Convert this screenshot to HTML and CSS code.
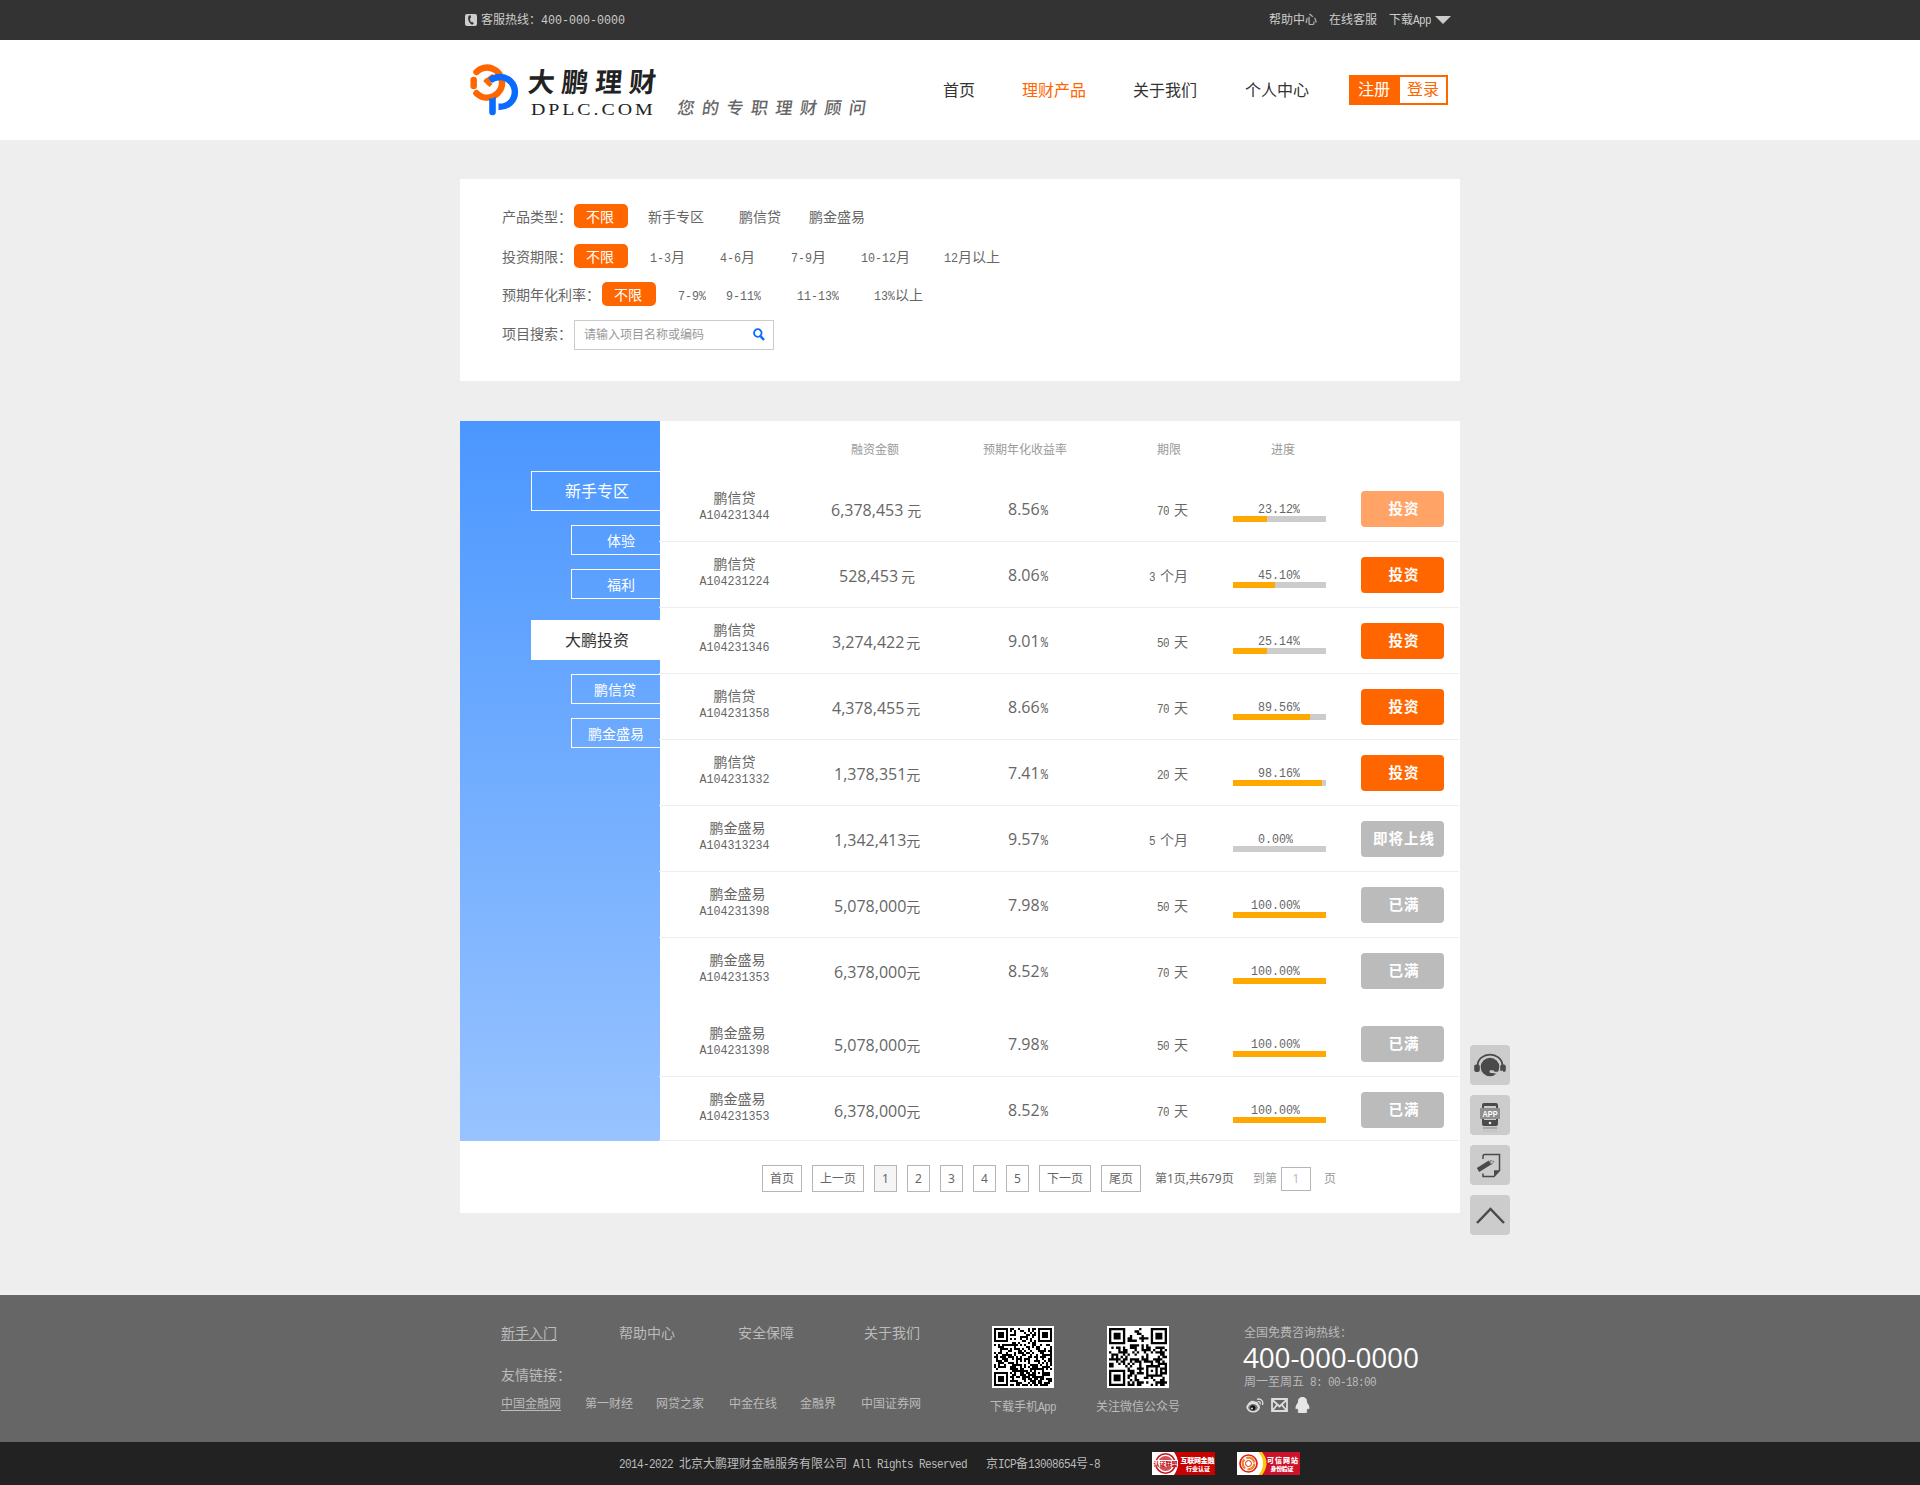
FILE: index.html
```html
<!DOCTYPE html>
<html lang="zh-CN">
<head>
<meta charset="utf-8">
<title>大鹏理财 - 理财产品</title>
<link rel="stylesheet" href="styles.css">
</head>
<body>
<div class="topbar"><div class="wrap topbar-in">
  <svg class="phone" width="12" height="12" viewBox="0 0 12 12"><rect width="12" height="12" rx="2" fill="#ccc"/><path d="M3.800 1.500C2.200 4.500 3.600 9 7.200 10.800L8.800 9.600 7.600 8 6.400 8.300C5.300 7.300 4.900 5.500 5.100 4.200L6.100 3.600 5.600 1.300Z" fill="#333"/></svg>
  <span class="hot">客服热线：<span class="n">400-000-0000</span></span>
  <div class="toplinks"><a>帮助中心</a><a>在线客服</a><a>下载<span class="n6">App</span></a><svg width="16" height="8" viewBox="0 0 16 8"><path d="M0 0H16L8 8Z" fill="#ccc"/></svg></div>
</div></div>

<header class="header"><div class="wrap header-in">
  <svg class="logo" width="50" height="54" viewBox="469 63 50 54" fill="none" stroke-width="6.500">
    <path d="M476.500 72A15 15 0 0 1 502 81A15 15 0 0 1 476.500 93.200" stroke="#f60" stroke-linecap="round"/>
    <path d="M473.700 80V86" stroke="#f60" stroke-linecap="round"/>
    <path d="M485.500 82.500L494 76" stroke="#f60" stroke-width="5.500"/>
    <path d="M484.800 79.500L491 85.500" stroke="#f60" stroke-width="4.500"/>
    <path d="M490 80.500Q494.500 77 500 77A14.900 14.900 0 0 1 500 106.800H498.500" stroke="#0a6cff"/>
    <path d="M489.200 98Q492.500 99.500 495.800 96.500V112A3.300 3.300 0 0 1 489.200 112Z" fill="#0a6cff"/>
  </svg>
  <div class="brand"><div class="brand-cn">大鹏理财</div><div class="brand-en">DPLC.COM</div></div>
  <div class="slogan">您的专职理财顾问</div>
  <nav class="nav"><a>首页</a><a class="on">理财产品</a><a>关于我们</a><a>个人中心</a></nav>
  <div class="auth"><a class="reg">注册</a><a class="login">登录</a></div>
</div></header>

<section class="wrap filters">
  <div class="frow f1"><span>产品类型：</span><a class="pill">不限</a><a>新手专区</a><a>鹏信贷</a><a>鹏金盛易</a></div>
  <div class="frow f2"><span>投资期限：</span><a class="pill">不限</a><a><i class="n">1-3</i>月</a><a><i class="n">4-6</i>月</a><a><i class="n">7-9</i>月</a><a><i class="n">10-12</i>月</a><a><i class="n">12</i>月以上</a></div>
  <div class="frow f3"><span>预期年化利率：</span><a class="pill">不限</a><a><i class="n">7-9%</i></a><a><i class="n">9-11%</i></a><a><i class="n">11-13%</i></a><a><i class="n">13%</i>以上</a></div>
  <div class="frow f4"><span>项目搜索：</span><div class="search"><span>请输入项目名称或编码</span><svg width="12" height="13" viewBox="0 0 12 13" fill="none" stroke="#0a6cff"><circle cx="4.800" cy="5" r="3.800" stroke-width="1.800"/><path d="M7.500 8.200L11 12" stroke-width="2.500"/></svg></div></div>
</section>

<main class="wrap board">
  <div class="board-top">
    <aside class="side">
      <a class="big">新手专区</a><a class="sub two">体验</a><a class="sub two">福利</a>
      <a class="big active">大鹏投资</a><a class="sub three">鹏信贷</a><a class="sub four">鹏金盛易</a>
    </aside>
    <div class="list">
      <div class="thead"><span>融资金额</span><span>预期年化收益率</span><span>期限</span><span>进度</span></div>
      <div class="row"><div class="name">鹏信贷<i class="n">A104231344</i></div><div class="amt wide"><b>6,378,453</b>元</div><div class="rate"><b>8.56</b><i class="n6">%</i></div><div class="term"><i class="n6">70</i>天</div><div class="prog"><i class="n">23.12%</i><div class="bar"><div class="fill" style="width:34px"></div></div></div><a class="btn soft">投资</a></div>
      <div class="row"><div class="name">鹏信贷<i class="n">A104231224</i></div><div class="amt short"><b>528,453</b>元</div><div class="rate"><b>8.06</b><i class="n6">%</i></div><div class="term"><i class="n6">3</i>个月</div><div class="prog"><i class="n">45.10%</i><div class="bar"><div class="fill" style="width:42px"></div></div></div><a class="btn">投资</a></div>
      <div class="row"><div class="name">鹏信贷<i class="n">A104231346</i></div><div class="amt"><b>3,274,422</b>元</div><div class="rate"><b>9.01</b><i class="n6">%</i></div><div class="term"><i class="n6">50</i>天</div><div class="prog"><i class="n">25.14%</i><div class="bar"><div class="fill" style="width:34px"></div></div></div><a class="btn">投资</a></div>
      <div class="row"><div class="name">鹏信贷<i class="n">A104231358</i></div><div class="amt"><b>4,378,455</b>元</div><div class="rate"><b>8.66</b><i class="n6">%</i></div><div class="term"><i class="n6">70</i>天</div><div class="prog"><i class="n">89.56%</i><div class="bar"><div class="fill" style="width:77px"></div></div></div><a class="btn">投资</a></div>
      <div class="row"><div class="name">鹏信贷<i class="n">A104231332</i></div><div class="amt tight"><b>1,378,351</b>元</div><div class="rate"><b>7.41</b><i class="n6">%</i></div><div class="term"><i class="n6">20</i>天</div><div class="prog"><i class="n">98.16%</i><div class="bar"><div class="fill" style="width:89px"></div></div></div><a class="btn">投资</a></div>
      <div class="row"><div class="name four">鹏金盛易<i class="n">A104313234</i></div><div class="amt tight"><b>1,342,413</b>元</div><div class="rate"><b>9.57</b><i class="n6">%</i></div><div class="term"><i class="n6">5</i>个月</div><div class="prog"><i class="n">0.00%</i><div class="bar"></div></div><a class="btn off">即将上线</a></div>
      <div class="row"><div class="name four">鹏金盛易<i class="n">A104231398</i></div><div class="amt tight"><b>5,078,000</b>元</div><div class="rate"><b>7.98</b><i class="n6">%</i></div><div class="term"><i class="n6">50</i>天</div><div class="prog full"><i class="n">100.00%</i><div class="bar"><div class="fill" style="width:93px"></div></div></div><a class="btn off">已满</a></div>
      <div class="row noline"><div class="name four">鹏金盛易<i class="n">A104231353</i></div><div class="amt tight"><b>6,378,000</b>元</div><div class="rate"><b>8.52</b><i class="n6">%</i></div><div class="term"><i class="n6">70</i>天</div><div class="prog full"><i class="n">100.00%</i><div class="bar"><div class="fill" style="width:93px"></div></div></div><a class="btn off">已满</a></div>
      <div class="row"><div class="name four">鹏金盛易<i class="n">A104231398</i></div><div class="amt tight"><b>5,078,000</b>元</div><div class="rate"><b>7.98</b><i class="n6">%</i></div><div class="term"><i class="n6">50</i>天</div><div class="prog full"><i class="n">100.00%</i><div class="bar"><div class="fill" style="width:93px"></div></div></div><a class="btn off">已满</a></div>
      <div class="row last"><div class="name four">鹏金盛易<i class="n">A104231353</i></div><div class="amt tight"><b>6,378,000</b>元</div><div class="rate"><b>8.52</b><i class="n6">%</i></div><div class="term"><i class="n6">70</i>天</div><div class="prog full"><i class="n">100.00%</i><div class="bar"><div class="fill" style="width:93px"></div></div></div><a class="btn off">已满</a></div>
    </div>
  </div>
  <div class="pager">
    <a class="p2">首页</a><a class="p3">上一页</a><a class="p1 cur">1</a><a class="p1">2</a><a class="p1">3</a><a class="p1">4</a><a class="p1">5</a><a class="p3">下一页</a><a class="p2">尾页</a>
    <span class="total">第1页,共679页</span><span class="goto">到第</span><span class="pageno">1</span><span class="goto end">页</span>
  </div>
  <div class="tools">
    <svg viewBox="0 0 40 40"><rect width="40" height="40" rx="4" fill="#ccc"/><circle cx="20" cy="22" r="9.300" fill="#4a4a4a"/><path d="M7.500 20.500C8.500 6 31.500 6 32.500 20.500" fill="none" stroke="#4a4a4a" stroke-width="1.800"/><rect x="4.200" y="19.500" width="5.600" height="7.500" rx="2" fill="#4a4a4a"/><rect x="30.200" y="19.500" width="5.600" height="7.500" rx="2" fill="#4a4a4a"/><path d="M33 26C30 28.500 26 28 22 26.800" fill="none" stroke="#ccc" stroke-width="1.800"/><rect x="19.500" y="25.300" width="4.500" height="2.600" rx="1.300" fill="#ccc"/></svg>
    <svg viewBox="0 0 40 40"><rect width="40" height="40" rx="4" fill="#ccc"/><rect x="12" y="8" width="16" height="23" rx="2" fill="#4a4a4a"/><rect x="14" y="11" width="12" height="14" fill="#ccc"/><rect x="10" y="13" width="20" height="11" fill="#8e8e8e"/><text x="20" y="22" text-anchor="middle" textLength="15" lengthAdjust="spacingAndGlyphs" class="apptext">APP</text><circle cx="20" cy="28" r="1.300" fill="#eee"/><path d="M13 33H27" stroke="#a9a9a9" stroke-width="2"/><path d="M13 36H27" stroke="#bdbdbd"/></svg>
    <svg viewBox="0 0 40 40"><rect width="40" height="40" rx="4" fill="#ccc"/><path d="M13 14V11Q13 9.500 14.500 9.500H29.500V25.500L24 31.500H13V28.500" fill="none" stroke="#4a4a4a" stroke-width="1.500"/><path d="M29.800 25.300L24 31.800 24 25.300Z" fill="#4a4a4a"/><path d="M8 25L20 17.500" stroke="#4a4a4a" stroke-width="4.500"/><path d="M20.200 15.500L24 16.500 21.500 19.500Z" fill="#ddd" stroke="#4a4a4a" stroke-width=".6"/></svg>
    <svg viewBox="0 0 40 40"><rect width="40" height="40" rx="4" fill="#ccc"/><path d="M7 28L20.500 14 34 28" fill="none" stroke="#4a4a4a" stroke-width="2.500"/></svg>
  </div>
</main>

<footer class="footer"><div class="wrap footer-in">
  <div class="fl">
    <div class="flinks"><a class="u">新手入门</a><a>帮助中心</a><a>安全保障</a><a>关于我们</a></div>
    <div class="ftitle">友情链接：</div>
    <div class="friends"><a class="u">中国金融网</a><a>第一财经</a><a>网贷之家</a><a>中金在线</a><a>金融界</a><a>中国证券网</a></div>
  </div>
  <div class="qr q1"><svg id="qr-app" width="62" height="62" viewBox="0 0 62 62"></svg><span>下载手机<i class="n6">App</i></span></div>
  <div class="qr q2"><svg id="qr-wechat" width="62" height="62" viewBox="0 0 62 62"></svg><span>关注微信公众号</span></div>
  <div class="contact">
    <div>全国免费咨询热线：</div><div class="tel">400-000-0000</div><div class="hours">周一至周五<i class="n6"> 8: 00-18:00</i></div>
    <div class="soc">
      <svg width="18" height="16" viewBox="0 0 18 16"><ellipse cx="7.200" cy="10.200" rx="6.800" ry="5.200" fill="#ddd"/><path d="M2 6.800C4 4 6.500 3.200 8 4.200L11.500 5 12 8Z" fill="#ddd"/><ellipse cx="7" cy="10.600" rx="4.800" ry="3.500" fill="#777"/><circle cx="6.800" cy="10.800" r="2.600" fill="#111"/><circle cx="6" cy="11.500" r=".9" fill="#fff"/><path d="M11 2.300C15 1 18 4.500 16.300 8M11.700 4.700C13.700 4.200 14.700 5.700 14 7.300" fill="none" stroke="#ddd" stroke-width="1.300"/></svg>
      <svg width="17" height="14" viewBox="0 0 17 14" fill="none" stroke="#ddd" stroke-width="1.800"><path d="M1 1H16V13H1ZM1.500 2L8.500 8.500 15.500 2M1.500 12.500L6 7M15.500 12.500L11 7"/></svg>
      <svg width="15" height="16" viewBox="0 0 15 16"><path d="M7.500 0C10.800 0 12.300 2.300 12 5.500C13.600 7.500 15 10 14.300 12.300L12.700 11.500C12.500 12.500 12 13 11.500 13.700C13 14.500 12.500 16 10 16H5C2.500 16 2 14.500 3.500 13.700C3 13 2.500 12.500 2.300 11.500L.7 12.300C0 10 1.400 7.500 3 5.500C2.700 2.300 4.200 0 7.500 0Z" fill="#e6e6e6"/></svg>
    </div>
  </div>
</div></footer>
<div class="bottom"><div class="wrap bottom-in">
  <span class="copy"><i class="n6">2014-2022 </i>北京大鹏理财金融服务有限公司<i class="n6"> All Rights Reserved</i></span><span class="icp">京<i class="n6">ICP</i>备<i class="n6">13008654</i>号<i class="n6">-8</i></span>
  <svg class="badge" width="63" height="23" viewBox="0 0 63 23"><rect width="63" height="23" fill="#fff"/><path d="M22 0H63V23H22Q30 11.500 22 0Z" fill="#c80000"/><circle cx="13.500" cy="11.500" r="9.700" fill="none" stroke="#c4161c" stroke-width="1.500"/><circle cx="13.500" cy="11.500" r="7.500" fill="#d25055"/><rect x="1" y="8" width="25" height="7" fill="#fff"/><text x="13.500" y="14" class="bt red" textLength="24">认证联盟</text><text x="45.500" y="11" class="bt" textLength="34">互联网金融</text><text x="46" y="19.300" class="bt small" textLength="24">行业认证</text></svg>
  <svg class="badge" width="63" height="23" viewBox="0 0 63 23"><rect width="63" height="23" fill="#fff"/><path d="M22 0H63V23H22Q32 11.500 22 0Z" fill="#d0112b"/><path d="M22 0H25Q34 11.500 25 23H22Q30 11.500 22 0Z" fill="#fc0"/><circle cx="11.500" cy="11.500" r="8.500" fill="none" stroke="#e0211b" stroke-width="1.700"/><circle cx="11.500" cy="11.500" r="5.800" fill="none" stroke="#f58220" stroke-width="2.200" stroke-dasharray="10 2.200"/><circle cx="11.500" cy="11.500" r="3" fill="none" stroke="#e0211b"/><text x="45.500" y="10.500" class="bt" textLength="31">可信网站</text><text x="45" y="18.800" class="bt small" textLength="23">身份验证</text></svg>
</div></div>
<script src="qr.js"></script>
</body>
</html>
```
FILE: styles.css
```css
* { box-sizing: border-box; }
body { margin: 0; background: #eee; color: #666; font: 400 14px/1 "Liberation Mono", "Noto Sans CJK SC", sans-serif; }
i { font-style: normal; }
b { font-weight: 400; }
a { color: inherit; white-space: nowrap; }
svg { display: block; flex: none; }
.wrap { width: 1000px; margin: 0 auto; }
.n, .n6 { display: inline-block; line-height: 1; transform: scaleY(1.150); transform-origin: 50% 80%; white-space: pre; }
.n { font-size: 11.670px; }
.n6 { font-size: 11px; letter-spacing: -0.600px; }

.topbar { height: 40px; background: #333; color: #ccc; font-size: 12px; }
.topbar-in { height: 40px; display: flex; align-items: center; padding: 0 9px 0 5px; }
.hot { margin-left: 4px; padding-top: 2px; white-space: nowrap; }
.toplinks { margin-left: auto; display: flex; align-items: center; gap: 12px; }
.toplinks a { padding-top: 2px; }
.toplinks svg { margin-left: -8px; }

.header { height: 100px; background: #fff; }
.header-in { height: 100px; display: flex; }
.logo { margin: 23px 0 0 9px; }
.brand { margin: 25px 0 0 9px; width: 140px; color: #222; }
.brand-cn { font: 700 27px/32px "Noto Sans CJK SC", sans-serif; letter-spacing: 6.700px; white-space: nowrap; transform: skewX(-5deg); }
.brand-en { margin: 3px 0 0 3px; font: 17px/20px "Liberation Serif", serif; letter-spacing: 2.500px; transform: scaleX(1.170); transform-origin: 0 50%; }
.slogan { margin: 57px 0 0 8px; width: 210px; font: 500 17px/20px "Noto Sans CJK SC", sans-serif; letter-spacing: 7.500px; white-space: nowrap; transform: skewX(-8deg); }
.nav { display: grid; grid-template-columns: 79px 111px 112px 104px; margin: 44px 0 0 57px; color: #333; font-size: 16px; }
.nav .on { color: #f60; }
.auth { display: flex; width: 99px; height: 30px; margin-top: 35px; background: #f60; border: 2px solid #f60; font-size: 16px; line-height: 29px; flex: none; }
.reg { width: 49px; padding-left: 7px; color: #fff; }
.login { flex: 1; height: 26px; padding-left: 7px; background: #fff; color: #f60; }

.filters { margin-top: 39px; height: 202px; padding: 25px 0 0 42px; background: #fff; }
.frow { display: grid; height: 24px; line-height: 28px; white-space: nowrap; }
.pill { width: 54px; height: 24px; padding-left: 12px; border-radius: 5px; background: #f60; color: #fff; }
.f1 { grid-template-columns: 72px 74px 91px 70px auto; }
.f2 { grid-template-columns: 72px 76px 70px 71px 70px 83px auto; margin-top: 16px; }
.f3 { grid-template-columns: 100px 76px 48px 71px 77px auto; margin-top: 14px; }
.f4 { grid-template-columns: 72px 200px; margin-top: 14px; height: 30px; line-height: 31px; }
.search { display: flex; align-items: center; justify-content: space-between; height: 30px; border: 1px solid #ccc; padding: 0 8px 0 9px; color: #999; font-size: 12px; }
.search span { padding-top: 2px; }
.search svg { margin-top: -2px; }

.board { position: relative; margin-top: 40px; height: 792px; background: #fff; }
.board-top { display: flex; height: 720px; }
.side { width: 200px; flex: none; padding-top: 50px; background: linear-gradient(#4b97ff, #98c3ff); color: #fff; display: flex; flex-direction: column; align-items: flex-end; }
.big { width: 129px; height: 40px; margin-bottom: 14px; padding-left: 33px; border: 1px solid #fff; border-right: 0; font-size: 16px; line-height: 43px; }
.active { margin-top: 7px; background: #fff; color: #333; }
.sub { width: 89px; height: 30px; margin-bottom: 14px; border: 1px solid #fff; border-right: 0; line-height: 32px; }
.two { padding-left: 35px; }
.three { padding-left: 22px; }
.sub.four { padding-left: 16px; }
.list { width: 800px; margin-left: -1px; flex: none; }
.thead { height: 55px; padding: 24px 0 0 192px; display: grid; grid-template-columns: 132px 174px 114px auto; color: #999; font-size: 12px; }
.row { display: flex; height: 66px; border-bottom: 1px solid #eee; }
.noline { border-color: transparent; margin-bottom: 7px; }
.last { height: 64px; }
.name { width: 150px; padding: 16px 0 0 1px; text-align: center; }
.name.four { text-indent: 6px; }
.name .n { display: block; margin-top: 5px; text-indent: 0; }
.amt { width: 199px; padding: 22px 0 0 23px; line-height: 24px; white-space: nowrap; }
.amt b, .rate b { font: 400 16px/24px "Open Sans", "Noto Sans", sans-serif; }
.amt b { margin-right: 2px; }
.amt.wide { padding-left: 22px; }
.amt.wide b { margin-right: 4px; }
.amt.short { padding-left: 30px; }
.amt.short b { margin-right: 3px; }
.amt.tight { padding-left: 25px; }
.amt.tight b { margin-right: 0; }
.rate { width: 100px; padding-top: 21px; line-height: 24px; }
.rate .n6 { margin-left: 1px; font-size: 12px; }
.term { width: 80px; padding-top: 23px; line-height: 24px; text-align: right; }
.term .n6 { margin-right: 5px; }
.prog { width: 93px; margin-left: 45px; padding-top: 28px; }
.prog .n { display: block; height: 12px; padding-left: 25px; line-height: 13px; }
.prog.full .n { padding-left: 18px; }
.bar { height: 6px; background: #ccc; }
.fill { height: 6px; background: #ffa800; }
.btn { width: 83px; height: 36px; margin: 15px 0 0 35px; border-radius: 4px; background: #f60; color: #fff; text-align: center; font-size: 14.500px; font-weight: 700; line-height: 39px; letter-spacing: 1px; padding-left: 3px; }
.soft { background: #ffa366; }
.off { background: #bbb; }

.pager { display: flex; align-items: center; height: 74px; padding: 1px 0 0 302px; font: 12px/25px "Noto Sans", "Noto Sans CJK SC", sans-serif; white-space: nowrap; }
.pager a { height: 27px; margin-right: 10px; border: 1px solid #b5b5b5; text-align: center; flex: none; }
.p1 { width: 23px; }
.p2 { width: 40px; }
.p3 { width: 52px; }
.cur { background: #f5f5f5; }
.total { width: 98px; margin-left: 4px; }
.goto { width: 28px; color: #999; }
.pageno { width: 30px; height: 24px; border: 1px solid #b5b5b5; line-height: 22px; text-align: center; color: #bbb; }
.goto.end { margin-left: 13px; }
.tools { position: absolute; left: 1010px; top: 624px; display: grid; gap: 10px; }
.tools svg { width: 40px; height: 40px; }
.apptext { font: 700 9px "Liberation Sans", sans-serif; fill: #fff; }

.footer { margin-top: 82px; height: 147px; background: #666; color: #bbb; }
.footer-in { display: flex; padding-top: 31px; }
.fl { width: 532px; padding: 1px 0 0 41px; }
.u { text-decoration: underline; text-underline-offset: 2px; }
.flinks { display: grid; grid-template-columns: 118px 119px 126px auto; justify-items: start; }
.ftitle { margin-top: 28px; }
.friends { display: grid; grid-template-columns: 84px 71px 73px 71px 61px auto; justify-items: start; margin-top: 16px; font-size: 12px; }
.qr { width: 115px; font-size: 12px; white-space: nowrap; }
.qr span { display: block; margin-top: 14px; }
.q1 span { margin-left: -2px; }
.q2 { width: 137px; }
.q2 span { margin-left: -11px; }
.contact { font-size: 12px; padding-top: 2px; }
.tel { margin: 0 0 0 -1px; color: #fff; font: 28px/34px "Open Sans", "Noto Sans", sans-serif; letter-spacing: -0.200px; }
.hours { margin-top: 3px; }
.soc { display: flex; align-items: center; gap: 7px; margin: 8px 0 0 2px; }
.bottom { height: 43px; background: #222; color: #bbb; font-size: 12px; }
.bottom-in { height: 43px; display: flex; align-items: center; padding-left: 159px; white-space: nowrap; }
.copy, .icp { padding-top: 2px; }
.copy { width: 367px; }
.icp { width: 166px; }
.badge { margin-right: 22px; }
.bt { font: 900 7px "Noto Sans CJK SC", sans-serif; fill: #fff; text-anchor: middle; }
.bt.small { font-size: 6px; }
.bt.red { font-size: 6px; fill: #c4161c; }
```
FILE: qr.js
```js
// Draws a QR-style matrix: three finder squares, one alignment square and data modules.
function drawQr(id, size, seed) {
  var cell = 58 / size, state = seed, path = "";
  function next() { state = (state * 1103515245 + 12345) % 2147483648; return state / 2147483648; }
  function square(x, y, ox, oy, n) {
    var dx = x - ox, dy = y - oy;
    if (dx < 0 || dy < 0 || dx >= n || dy >= n) return null;
    var ring = Math.min(dx, dy, n - 1 - dx, n - 1 - dy);
    return ring !== 1;
  }
  for (var y = 0; y < size; y++) {
    for (var x = 0; x < size; x++) {
      var on = next() < 0.52;
      if ((x < 8 && y < 8) || (x >= size - 8 && y < 8) || (x < 8 && y >= size - 8)) on = false;
      [[0, 0, 7], [size - 7, 0, 7], [0, size - 7, 7], [size - 9, size - 9, 5]].forEach(function (f) {
        var s = square(x, y, f[0], f[1], f[2]);
        if (s !== null) on = s;
      });
      if (on) path += "M" + (2 + x * cell) + " " + (2 + y * cell) + "h" + cell + "v" + cell + "h-" + cell + "z";
    }
  }
  document.getElementById(id).innerHTML = '<rect width="62" height="62" fill="#fff"/><path d="' + path + '"/>';
}
drawQr("qr-app", 29, 71);
drawQr("qr-wechat", 25, 2022);
```
